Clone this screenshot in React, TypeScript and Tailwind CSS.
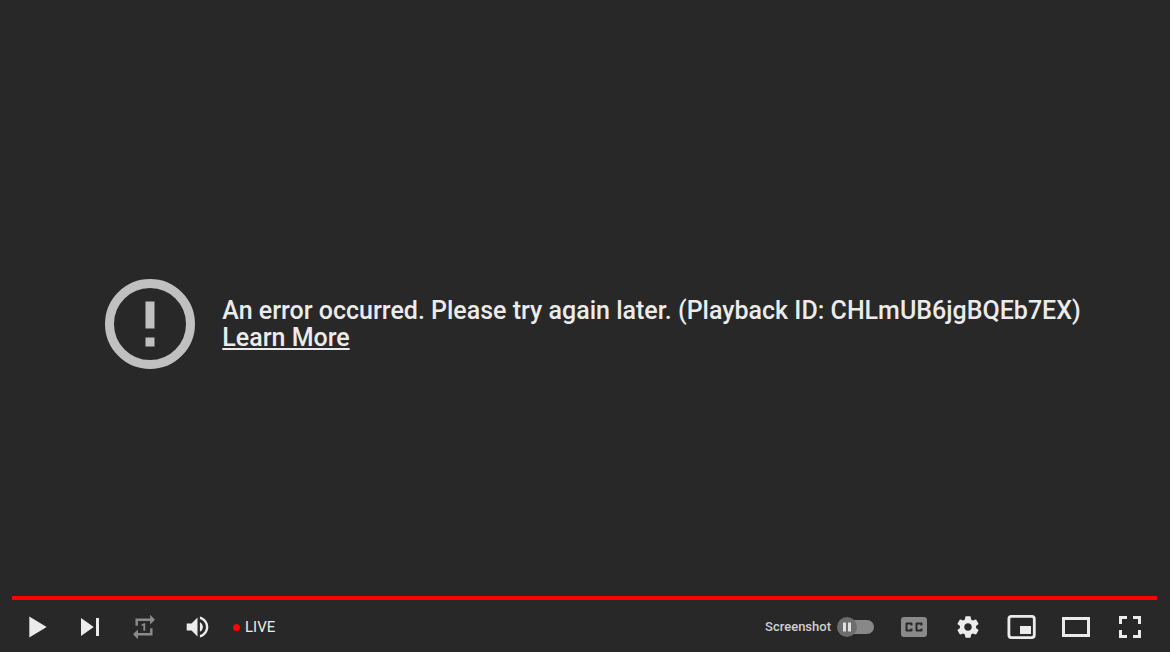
import type { ReactNode } from "react";

function ControlButton({ label, dimmed = false, children }: { label: string; dimmed?: boolean; children: ReactNode }) {
  return (
    <button
      type="button"
      aria-label={label}
      className={`flex h-[50px] w-[54px] shrink-0 cursor-pointer items-center justify-center ${dimmed ? "opacity-50" : ""}`}
    >
      <svg viewBox="0 0 36 36" className="h-9 w-9" fill="currentColor" aria-hidden="true">
        {children}
      </svg>
    </button>
  );
}

export default function App() {
  return (
    <div className="relative flex h-screen flex-col overflow-hidden bg-[#282828] font-[Roboto,sans-serif] text-[#ebebeb]">
      {/* Error message */}
      <main className="flex flex-1 items-center pb-1 pl-[9%] pr-[5%]">
        <div className="flex items-center gap-[27px]">
          <svg viewBox="0 0 90 90" className="h-[90px] w-[90px] shrink-0 text-[#c0c0c0]" aria-hidden="true">
            <circle cx="45" cy="45" r="40.5" fill="none" stroke="currentColor" strokeWidth="9" />
            <path d="M40.5 22.5h9v27h-9zM40.5 58.5h9v9h-9z" fill="currentColor" />
          </svg>
          <div className="text-[25px] leading-[27px] font-medium">
            <p>An error occurred. Please try again later. (Playback ID: CHLmUB6jgBQEb7EX)</p>
            <a href="#" className="underline">Learn More</a>
          </div>
        </div>
      </main>

      {/* Player controls */}
      <div className="absolute inset-x-0 bottom-0">
        <div className="mr-[13px] ml-3 h-1 bg-[#ff0000]" />
        <div className="flex items-center justify-between pt-0.5 pr-[13px] pl-[9px]">
          <div className="flex items-center">
            <ControlButton label="Play">
              <path d="M11.3 7.5L28.7 18L11.3 28.5z" />
            </ControlButton>
            <ControlButton label="Next">
              <path d="M9 27L21.75 18L9 9zM24 9h3v18h-3z" />
            </ControlButton>
            <ControlButton label="Loop" dimmed>
              <path
                transform="translate(3.36 3.36) scale(1.22)"
                d="M7 7h10v3l4-4-4-4v3H5v6h2V7zm10 10H7v-3l-4 4 4 4v-3h12v-6h-2v4zm-4-2V9h-1l-2 1v1h1.5v4H13z"
              />
            </ControlButton>
            <ControlButton label="Mute">
              <path
                transform="translate(-2.9 -3.6) scale(1.2)"
                d="M8,21 L12,21 L17,26 L17,10 L12,15 L8,15 Z M19,14 L19,22 C20.48,21.32 21.5,19.77 21.5,18 C21.5,16.26 20.48,14.74 19,14 Z M19,11.29 C21.89,12.15 24,14.83 24,18 C24,21.17 21.89,23.85 19,24.71 L19,26.77 C23.01,25.86 26,22.28 26,18 C26,13.72 23.01,10.14 19,9.23 Z"
              />
            </ControlButton>
            <button type="button" className="ml-2 flex cursor-pointer items-center gap-[5px] text-[15px] leading-5">
              <span className="h-[7px] w-[7px] rounded-full bg-[#ff0000]" />
              LIVE
            </button>
          </div>

          <div className="flex items-center">
            <label className="mr-[13px] flex cursor-pointer items-center gap-1.5 text-[13px] leading-5 font-medium text-[#cfcfcf]">
              Screenshot
              <span className="relative flex h-5 w-[37px] items-center">
                <input type="checkbox" role="switch" className="ml-1 h-[14px] w-[33px] cursor-pointer appearance-none rounded-full bg-[#888888]" />
                <svg viewBox="0 0 20 20" className="pointer-events-none absolute left-0 h-5 w-5" aria-hidden="true">
                  <circle cx="10" cy="10" r="10" fill="#6d6d6d" />
                  <path d="M6 5.5h3v9H6zM11 5.5h3v9h-3z" fill="#e0e0e0" />
                </svg>
              </span>
            </label>
            <ControlButton label="Subtitles" dimmed>
              <path
                fillRule="evenodd"
                d="M8 8h20a3 3 0 0 1 3 3v14a3 3 0 0 1-3 3H8a3 3 0 0 1-3-3V11a3 3 0 0 1 3-3z M10.5 13.5a1 1 0 0 0-1 1v7a1 1 0 0 0 1 1h5a1 1 0 0 0 1-1v-2h-2v1h-3v-5h3v1h2v-2a1 1 0 0 0-1-1z M20.5 13.5a1 1 0 0 0-1 1v7a1 1 0 0 0 1 1h5a1 1 0 0 0 1-1v-2h-2v1h-3v-5h3v1h2v-2a1 1 0 0 0-1-1z"
              />
            </ControlButton>
            <ControlButton label="Settings">
              <path
                transform="translate(-6.3 -6.3) scale(1.35)"
                d="m 23.94,18.78 c .03,-0.25 .05,-0.51 .05,-0.78 0,-0.27 -0.02,-0.52 -0.05,-0.78 l 1.68,-1.32 c .15,-0.12 .19,-0.33 .09,-0.51 l -1.6,-2.76 c -0.09,-0.17 -0.31,-0.24 -0.48,-0.17 l -1.99,.8 c -0.41,-0.32 -0.86,-0.58 -1.35,-0.78 l -0.30,-2.12 c -0.02,-0.19 -0.19,-0.33 -0.39,-0.33 l -3.2,0 c -0.2,0 -0.36,.14 -0.39,.33 l -0.30,2.12 c -0.48,.2 -0.93,.47 -1.35,.78 l -1.99,-0.8 c -0.18,-0.07 -0.39,0 -0.48,.17 l -1.6,2.76 c -0.10,.17 -0.05,.39 .09,.51 l 1.68,1.32 c -0.03,.25 -0.05,.52 -0.05,.78 0,.26 .02,.52 .05,.78 l -1.68,1.32 c -0.15,.12 -0.19,.33 -0.09,.51 l 1.6,2.76 c .09,.17 .31,.24 .48,.17 l 1.99,-0.8 c .41,.32 .86,.58 1.35,.78 l .30,2.12 c .02,.19 .19,.33 .39,.33 l 3.2,0 c .2,0 .36,-0.14 .39,-0.33 l .30,-2.12 c .48,-0.2 .93,-0.47 1.35,-0.78 l 1.99,.8 c .18,.07 .39,0 .48,-0.17 l 1.6,-2.76 c .09,-0.17 .05,-0.39 -0.09,-0.51 l -1.68,-1.32 z m -5.94,2.01 c -1.54,0 -2.8,-1.25 -2.8,-2.8 0,-1.54 1.25,-2.8 2.8,-2.8 1.54,0 2.8,1.25 2.8,2.8 0,1.54 -1.25,2.8 -2.8,2.8 z"
              />
            </ControlButton>
            <ControlButton label="Miniplayer">
              <rect x="4.9" y="7.4" width="25.4" height="21.2" rx="2.5" fill="none" stroke="currentColor" strokeWidth="2.8" />
              <path d="M16 17h11v8H16z" />
            </ControlButton>
            <ControlButton label="Theater mode">
              <path fillRule="evenodd" d="M4 8h28v20H4zM7 11v14h22V11z" />
            </ControlButton>
            <ControlButton label="Full screen">
              <path d="M7 7h8v3h-5v5H7zM21 7h8v8h-3v-5h-5zM7 21h3v5h5v3H7zM26 21h3v8h-8v-3h5z" />
            </ControlButton>
          </div>
        </div>
      </div>
    </div>
  );
}
